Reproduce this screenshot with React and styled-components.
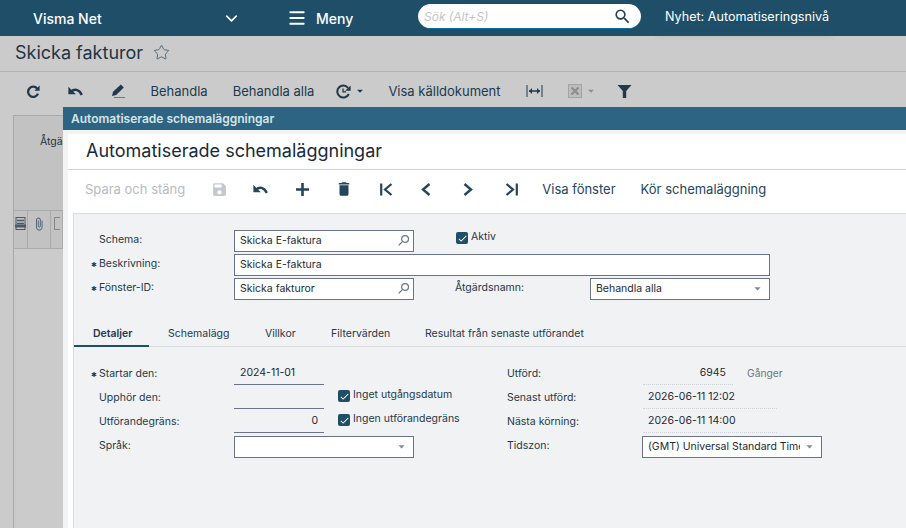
import React from 'react'
import styled, { createGlobalStyle } from 'styled-components'
import { Menu, ChevronDown, Star } from 'lucide-react'
import {
  MdDelete,
  MdSave,
  MdSearch,
  MdCheck,
  MdAttachFile,
  MdArrowDropDown,
} from 'react-icons/md'

const GlobalStyle = createGlobalStyle`
  html, body {
    margin: 0;
    padding: 0;
    overflow: hidden;
  }
  body {
    font-family: Inter, "Liberation Sans", sans-serif;
    color: #25384a;
  }
`

const Page = styled.div`
  position: relative;
  width: 906px;
  height: 528px;
  overflow: hidden;
  display: flex;
  flex-direction: column;
  background: #cbcbcb;
`

const TopBar = styled.header`
  flex: 0 0 36px;
  display: flex;
  align-items: center;
  background: #1f4e68;
  color: #fff;
  padding-left: 33px;
`

const Brand = styled.div`
  width: 189px;
  font-size: 14px;
  font-weight: 500;
`

const MenuToggle = styled.div`
  display: flex;
  align-items: center;
  width: 65px;
`

const MenuLabel = styled.div`
  display: flex;
  align-items: center;
  gap: 9px;
  width: 131px;
  font-size: 14px;
  font-weight: 500;
`

const Search = styled.div`
  box-sizing: border-box;
  width: 223px;
  height: 25px;
  margin-top: -3px;
  display: flex;
  align-items: center;
  justify-content: space-between;
  padding: 0 9px 0 6px;
  background: #fff;
  border-radius: 13px;
  border-bottom: 1px solid #0d6ea3;
  color: #c4c4c4;
  font-size: 12px;
  font-style: italic;

  svg {
    color: #1f3f55;
  }
`

const News = styled.div`
  position: relative;
  margin-left: 24px;
  margin-top: -3px;
  font-size: 12.6px;

  &::after {
    content: '';
    position: absolute;
    left: -8px;
    right: -4px;
    bottom: -10px;
    height: 2px;
    box-shadow: 0 2px 5px rgba(90, 95, 120, 0.22);
  }
`

const TitleBar = styled.div`
  flex: 0 0 36px;
  display: flex;
  align-items: center;
  gap: 10px;
  padding: 0 0 3px 15px;
  box-sizing: border-box;
  border-bottom: 1px solid #b3b3b3;
  color: #1e3445;
  font-size: 18px;
`

const Tools = styled.div`
  display: flex;
  align-items: center;
  flex: 0 0 ${(p) => p.$height}px;
  padding: ${(p) => p.$top}px 0 ${(p) => p.$bottom}px ${(p) => p.$inset}px;
  box-sizing: border-box;
  color: ${(p) => p.$color};
`

const ToolIcon = styled.span`
  flex: 0 0 ${(p) => p.$width}px;
  display: flex;
  align-items: center;
  justify-content: center;
  gap: 2px;
  color: ${(p) => p.$color || 'inherit'};
`

const ToolText = styled.span`
  padding: 0 12.5px;
  flex: none;
  font-size: 13px;
  color: ${(p) => p.$color || 'inherit'};
`

const Backdrop = styled.div`
  flex: 1;
  margin: 8px 0 0 13px;
  border-left: 1px solid #a9a9a9;
  border-top: 1px solid #a9a9a9;
  display: flex;
  flex-direction: column;
`

const GridHead = styled.div`
  flex: 0 0 94px;
  box-sizing: border-box;
  background: #c2c2c2;
  padding: 19px 0 0 26px;
  font-size: 10.5px;
  color: #26323c;
`

const GridCells = styled.div`
  flex: 0 0 39px;
  display: flex;
  background: #c2c2c2;
  border-top: 1px solid #aaa;
  border-bottom: 1px solid #aaa;
  box-sizing: border-box;
`

const GridCell = styled.span`
  flex: 0 0 ${(p) => p.$width}px;
  box-sizing: border-box;
  display: flex;
  justify-content: center;
  padding-top: 6px;
  border-right: 1px solid #aaa;
  color: #4a5a68;
`

const Dialog = styled.section`
  position: absolute;
  left: 63px;
  top: 107px;
  width: 843px;
  height: 421px;
  display: flex;
  flex-direction: column;
  background: #f2f3f5;
`

const DialogBar = styled.div`
  flex: 0 0 23px;
  display: flex;
  align-items: center;
  padding-left: 8px;
  background: #2c6482;
  color: #d8e4ea;
  font-size: 12px;
  font-weight: 600;
`

const DialogBody = styled.div`
  flex: 1;
  margin: 4px 0 0 5px;
  display: flex;
  flex-direction: column;
  background: #fff;
  min-height: 0;
`

const DialogTitle = styled.h2`
  flex: 0 0 36px;
  box-sizing: border-box;
  margin: 0;
  padding: 0 0 2px 18px;
  display: flex;
  align-items: center;
  border-bottom: 1px solid #d0d3da;
  color: #172a3a;
  font-size: 18px;
  font-weight: 400;
`

const Panel = styled.div`
  flex: 1;
  margin-left: 5px;
  border-top: 1px solid #d8dade;
  border-left: 1px solid #d8dade;
  background: #f1f2f4;
  padding-top: 16px;
`

const HeadForm = styled.div`
  display: grid;
  grid-template-columns: 143px 180px 176px 180px;
  grid-auto-rows: 22px;
  row-gap: 2px;
  padding-left: 17px;
  align-items: center;
`

const Label = styled.label`
  position: relative;
  padding-left: ${(p) => p.$inset ?? 8}px;
  font-size: 10.5px;
  line-height: 14px;
  align-self: start;
  margin-top: ${(p) => p.$top ?? 3}px;
  color: #25384a;

  ${(p) =>
    p.$required &&
    `&::before {
      content: '✱';
      position: absolute;
      left: 0;
      top: 1px;
      font-size: 7px;
      color: #1f3f55;
    }`}
`

const Input = styled.div`
  box-sizing: border-box;
  height: 22px;
  width: ${(p) => p.$width || 'auto'};
  grid-column: ${(p) => p.$span || 'auto'};
  display: flex;
  align-items: center;
  padding: 0 ${(p) => p.$right ?? 5}px 1px 5px;
  background: #fff;
  border: 1px solid #6a7388;
  font-size: 10.5px;
  color: #1c2a36;
  white-space: nowrap;
  overflow: hidden;

  svg {
    flex: none;
    margin-left: auto;
  }
`

const LookupIcon = styled(MdSearch)`
  transform: scaleX(-1);
`

const Clip = styled.span`
  overflow: hidden;
  width: 152px;
`

const Check = styled.span`
  flex: none;
  width: 12px;
  height: 12px;
  border-radius: 2px;
  background: #1f4e68;
  color: #fff;
  display: flex;
  align-items: center;
  justify-content: center;
`

const CheckRow = styled.div`
  display: flex;
  align-items: flex-start;
  gap: 3px;
  align-self: start;
  margin: ${(p) => p.$top || 0}px 0 0 ${(p) => p.$inset || 0}px;
  font-size: 10.5px;
  line-height: 12px;
  color: #25384a;
  white-space: nowrap;
`

const CheckText = styled.span`
  margin-top: -1px;
`

const TabStrip = styled.nav`
  display: flex;
  box-sizing: border-box;
  margin-top: 22px;
  height: 25px;
  border-bottom: 1px solid #d8dade;
  font-size: 10.5px;
`

const Tab = styled.div`
  flex: 0 0 ${(p) => p.$width}px;
  box-sizing: border-box;
  height: 25px;
  padding-left: ${(p) => p.$inset}px;
  padding-top: 5px;
  color: #25384a;
  font-weight: ${(p) => (p.$active ? 600 : 400)};
  border-bottom: ${(p) => (p.$active ? '2px solid #1f4e68' : 'none')};
`

const Details = styled.div`
  display: grid;
  grid-template-columns: 143px 90px 14px 169px 136px 180px;
  grid-template-rows: 24px 24px 24px 25px;
  padding: 14px 0 0 17px;
  align-items: end;
`

const RowLabel = styled(Label)`
  align-self: center;
  margin-top: 1px;
`

const Underlined = styled.div`
  box-sizing: border-box;
  height: 24px;
  width: ${(p) => p.$width || 90}px;
  display: flex;
  align-items: center;
  justify-content: ${(p) => (p.$alignEnd ? 'flex-end' : 'flex-start')};
  padding: 0 ${(p) => (p.$dotted ? 7 : 6)}px 0 ${(p) => (p.$dotted ? 5 : 6)}px;
  border-bottom: 1px ${(p) => (p.$dotted ? 'dotted #cfd2d8' : 'solid #6a7388')};
  font-size: 10.5px;
  color: #1c2a36;
  white-space: nowrap;
`

const Unit = styled.div`
  display: flex;
  align-items: center;
  gap: 14px;
  font-size: 10.3px;
  color: #6c7680;
`

const Slot = styled.div`
  grid-column: ${(p) => p.$span || 'auto'};
  align-self: start;
  margin: ${(p) => p.$top || 0}px 0 0 ${(p) => p.$left || 0}px;
`

const Stroked = ({ width, height, children, sw = 2.3 }) => (
  <svg
    width={width}
    height={height}
    viewBox={`0 0 ${width} ${height}`}
    fill="none"
    stroke="currentColor"
    strokeWidth={sw}
  >
    {children}
  </svg>
)

const RefreshIcon = () => (
  <Stroked width={13} height={13}>
    <path d="M10.2 3.6A5.1 5.1 0 1 0 11 8.6" />
    <path d="M12.6 .6v5.2H7.4z" fill="currentColor" stroke="none" />
  </Stroked>
)

const ClockIcon = () => (
  <Stroked width={15} height={15} sw={2}>
    <path d="M12 3.8A6 6 0 1 0 12.8 10" />
    <path d="M14.6 1.4v5.4H9.2z" fill="currentColor" stroke="none" />
    <path d="M7 4.5v3.4h3" strokeWidth={1.3} />
  </Stroked>
)

const UndoIcon = () => (
  <Stroked width={15} height={10} sw={2.4}>
    <path d="M3 5.6C6.2 2.8 11 2.8 13.8 9" />
    <path d="M.4 .8v7.4h7.4z" fill="currentColor" stroke="none" />
  </Stroked>
)

const PencilIcon = () => (
  <Stroked width={14} height={14} sw={1}>
    <path d="M9.8 .6l3 3-7.6 7.4-4.2 1 1-4.2z" fill="currentColor" stroke="none" />
    <path d="M3 13.5h11" opacity=".55" />
  </Stroked>
)

const FunnelIcon = () => (
  <svg width="15" height="13" viewBox="0 0 15 13" fill="currentColor">
    <path d="M.5 0h14L9.2 6v7H5.8V6z" />
  </svg>
)

const PlusIcon = () => (
  <Stroked width={13} height={13} sw={2.6}>
    <path d="M6.5 0v13M0 6.5h13" />
  </Stroked>
)

const FirstIcon = () => (
  <Stroked width={13} height={13} sw={2.2}>
    <path d="M1.2 .5v12M11.5 1 5 6.5l6.5 5.5" />
  </Stroked>
)

const LastIcon = () => (
  <Stroked width={13} height={13} sw={2.2}>
    <path d="M11.8 .5v12M1.5 1 8 6.5 1.5 12" />
  </Stroked>
)

const PrevIcon = () => (
  <Stroked width={10} height={13} sw={2.4}>
    <path d="M8.5 1 2 6.5 8.5 12" />
  </Stroked>
)

const NextIcon = () => (
  <Stroked width={10} height={13} sw={2.4}>
    <path d="M1.5 1 8 6.5 1.5 12" />
  </Stroked>
)

const FitIcon = () => (
  <svg width="17" height="14" viewBox="0 0 17 14">
    <path d="M1 1v12M16 1v12" stroke="currentColor" fill="none" />
    <path d="M3 7h11" stroke="currentColor" strokeWidth="1.5" />
    <path d="M6 4 3 7l3 3zM11 4l3 3-3 3z" fill="currentColor" />
  </svg>
)

const ExcelIcon = () => (
  <svg width="14" height="14" viewBox="0 0 14 14">
    <rect x="0.5" y="0.5" width="13" height="13" fill="#bdbdbd" stroke="#a3a3a3" />
    <path d="M3.5 3.5l7 7M10.5 3.5l-7 7" stroke="#8b8f92" strokeWidth="2.2" />
  </svg>
)

const RowDocIcon = () => (
  <svg width="11" height="13" viewBox="0 0 11 13" fill="none" stroke="currentColor">
    <rect x="1" y=".5" width="9" height="12" strokeWidth="1" />
    <path d="M2 3.5h7M2 6.5h7" strokeWidth="1.4" />
    <rect x="0" y="7.5" width="11" height="3" fill="currentColor" stroke="none" />
  </svg>
)

const RowBoxIcon = () => (
  <svg width="6" height="13" viewBox="0 0 6 13" fill="none" stroke="#7d8790">
    <path d="M6 .5H.5v12H6" />
  </svg>
)

const topTools = [
  { icon: <RefreshIcon />, width: 40 },
  { icon: <UndoIcon />, width: 45 },
  { icon: <PencilIcon />, width: 40 },
  { text: 'Behandla' },
  { text: 'Behandla alla' },
  {
    icon: (
      <>
        <ClockIcon />
        <MdArrowDropDown size={14} />
      </>
    ),
    width: 49,
  },
  { text: 'Visa källdokument' },
  { icon: <FitIcon />, width: 42 },
  {
    icon: (
      <>
        <ExcelIcon />
        <MdArrowDropDown size={14} color="#8b8f92" />
      </>
    ),
    width: 55,
  },
  { icon: <FunnelIcon />, width: 28 },
]

const dialogTools = [
  { text: 'Spara och stäng', color: '#b6bbc3' },
  { icon: <MdSave size={17} />, width: 43, color: '#c3c8cf' },
  { icon: <UndoIcon />, width: 40 },
  { icon: <PlusIcon />, width: 43 },
  { icon: <MdDelete size={18} />, width: 40 },
  { icon: <FirstIcon />, width: 46 },
  { icon: <PrevIcon />, width: 32 },
  { icon: <NextIcon />, width: 52 },
  { icon: <LastIcon />, width: 36 },
  { text: 'Visa fönster' },
  { text: 'Kör schemaläggning' },
]

const tabs = [
  { label: 'Detaljer', width: 75, inset: 19, active: true },
  { label: 'Schemalägg', width: 94, inset: 19 },
  { label: 'Villkor', width: 63, inset: 22 },
  { label: 'Filtervärden', width: 95, inset: 25 },
  { label: 'Resultat från senaste utförandet', width: 200, inset: 24 },
]

const ToolRow = ({ items, ...props }) => (
  <Tools {...props}>
    {items.map((item, i) =>
      item.text ? (
        <ToolText key={i} $color={item.color}>
          {item.text}
        </ToolText>
      ) : (
        <ToolIcon key={i} $width={item.width} $color={item.color}>
          {item.icon}
        </ToolIcon>
      )
    )}
  </Tools>
)

const Lookup = ({ children }) => (
  <Input $right={2}>
    {children}
    <LookupIcon size={15} color="#6f7d88" />
  </Input>
)

const Select = ({ children, width }) => (
  <Input $width={width} $right={4}>
    {children}
    <MdArrowDropDown size={15} color="#7f8b96" />
  </Input>
)

const Checkbox = ({ children, inset, top }) => (
  <CheckRow $inset={inset} $top={top}>
    <Check>
      <MdCheck size={11} />
    </Check>
    <CheckText>{children}</CheckText>
  </CheckRow>
)

const App = () => (
  <>
    <GlobalStyle />
    <Page>
      <TopBar>
        <Brand>Visma Net</Brand>
        <MenuToggle>
          <ChevronDown size={19} strokeWidth={2} />
        </MenuToggle>
        <MenuLabel>
          <Menu size={20} strokeWidth={2.4} />
          Meny
        </MenuLabel>
        <Search>
          Sök (Alt+S)
          <MdSearch size={19} />
        </Search>
        <News>Nyhet: Automatiseringsnivå</News>
      </TopBar>

      <TitleBar>
        Skicka fakturor
        <Star size={17} strokeWidth={1.3} color="#4a6375" />
      </TitleBar>

      <ToolRow items={topTools} $height={35} $top={3} $bottom={0} $inset={13} $color="#21394b" />

      <Backdrop>
        <GridHead>Åtgä</GridHead>
        <GridCells>
          <GridCell $width={14}>
            <RowDocIcon />
          </GridCell>
          <GridCell $width={23}>
            <MdAttachFile size={14} />
          </GridCell>
          <GridCell $width={12}>
            <RowBoxIcon />
          </GridCell>
        </GridCells>
      </Backdrop>

      <Dialog>
        <DialogBar>Automatiserade schemaläggningar</DialogBar>
        <DialogBody>
          <DialogTitle>Automatiserade schemaläggningar</DialogTitle>
          <ToolRow items={dialogTools} $height={43} $top={0} $bottom={5} $inset={4.5} $color="#24465c" />
          <Panel>
            <HeadForm>
              <Label>Schema:</Label>
              <Lookup>Skicka E-faktura</Lookup>
              <Checkbox inset={42} top={2}>
                Aktiv
              </Checkbox>
              <Slot />
              <Label $required>Beskrivning:</Label>
              <Input $span="2 / 5">Skicka E-faktura</Input>
              <Label $required>Fönster-ID:</Label>
              <Lookup>Skicka fakturor</Lookup>
              <Label $inset={41}>Åtgärdsnamn:</Label>
              <Select>Behandla alla</Select>
            </HeadForm>

            <TabStrip>
              {tabs.map((tab) => (
                <Tab key={tab.label} $width={tab.width} $inset={tab.inset} $active={tab.active}>
                  {tab.label}
                </Tab>
              ))}
            </TabStrip>

            <Details>
              <RowLabel $required>Startar den:</RowLabel>
              <Underlined>2024-11-01</Underlined>
              <Slot $span="3 / 5" />
              <RowLabel $inset={0}>Utförd:</RowLabel>
              <Unit>
                <Underlined $dotted $alignEnd>
                  6945
                </Underlined>
                Gånger
              </Unit>

              <RowLabel>Upphör den:</RowLabel>
              <Underlined />
              <Slot />
              <Checkbox top={5}>Inget utgångsdatum</Checkbox>
              <RowLabel $inset={0}>Senast utförd:</RowLabel>
              <Underlined $dotted $width={134}>
                2026-06-11 12:02
              </Underlined>

              <RowLabel>Utförandegräns:</RowLabel>
              <Underlined $alignEnd>0</Underlined>
              <Slot />
              <Checkbox top={5}>Ingen utförandegräns</Checkbox>
              <RowLabel $inset={0}>Nästa körning:</RowLabel>
              <Underlined $dotted $width={134}>
                2026-06-11 14:00
              </Underlined>

              <RowLabel>Språk:</RowLabel>
              <Slot $span="2 / 5" $top={3}>
                <Select width="180px" />
              </Slot>
              <RowLabel $inset={0}>Tidszon:</RowLabel>
              <Slot $top={3} $left={-1}>
                <Select width="180px">
                  <Clip>(GMT) Universal Standard Time</Clip>
                </Select>
              </Slot>
            </Details>
          </Panel>
        </DialogBody>
      </Dialog>
    </Page>
  </>
)

export default App
